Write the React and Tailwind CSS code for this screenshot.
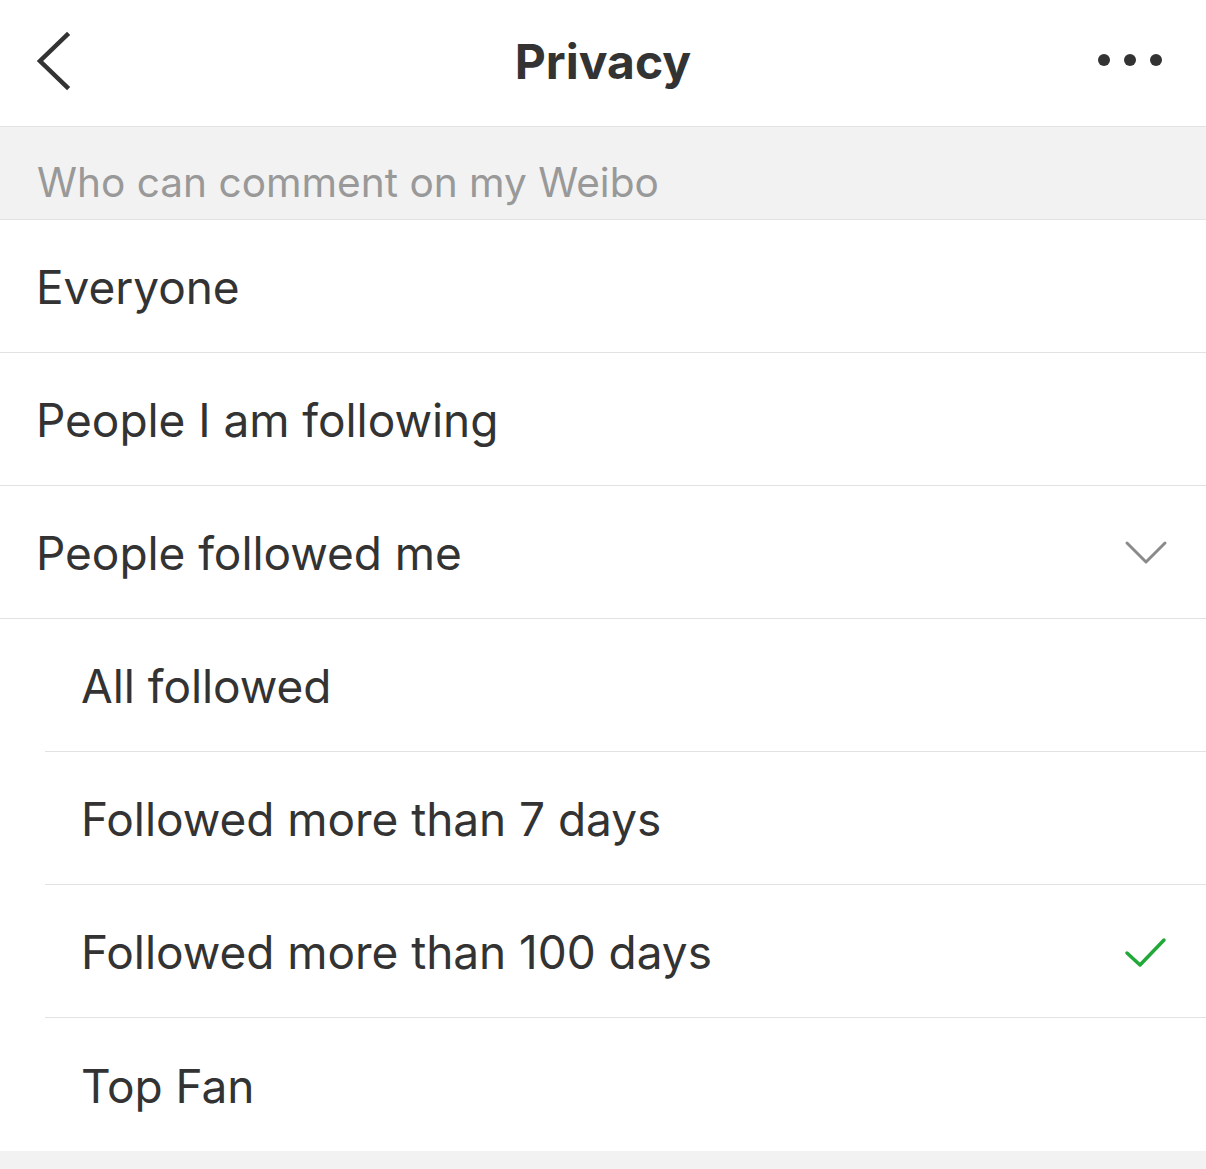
import React from "react";

const font = { fontFamily: "Inter, 'Noto Sans', sans-serif" };

function Chevron() {
  return (
    <svg width="44" height="30" viewBox="0 0 44 30" fill="none" className="mt-[1px]">
      <path d="M3 4 L22 23 L41 4" stroke="#8a8a8a" strokeWidth="3" strokeLinecap="round" strokeLinejoin="round" />
    </svg>
  );
}

function Check() {
  return (
    <svg width="44" height="34" viewBox="0 0 44 34" fill="none" className="ml-[2px]">
      <path d="M3 17 L16 29 L40 4" stroke="#22a838" strokeWidth="3.5" strokeLinecap="round" strokeLinejoin="round" />
    </svg>
  );
}

function Row({ label, sub, right, last }) {
  return (
    <div className={sub ? "pl-[45px]" : ""}>
      <div
        className={
          "flex items-center h-[133px] pt-[3px] pl-[36px] pr-[38px] " +
          (last ? "" : "border-b border-[#e2e2e2]")
        }
      >
        <span className="flex-1 text-[46px] text-[#333333] tracking-[-0.05px]">{label}</span>
        {right}
      </div>
    </div>
  );
}

export default function App() {
  return (
    <div className="w-[1206px] h-[1169px] bg-[#f2f2f2] overflow-hidden" style={font}>
      <div className="h-[127px] bg-white grid grid-cols-[1fr_auto_1fr] items-center px-[36px] border-b border-[#e2e2e2]">
        <div className="flex items-center">
          <svg width="36" height="60" viewBox="0 0 36 60" fill="none" className="mb-[4px]">
            <path d="M31 4 L4 30 L31 56" stroke="#333" strokeWidth="4.5" strokeLinecap="square" strokeLinejoin="miter" />
          </svg>
        </div>
        <span className="text-[48px] font-bold text-[#333333] pb-[2px]">Privacy</span>
        <div className="flex justify-end gap-[14px] items-center pr-[8px] pb-[6px]">
          <span className="w-[12px] h-[12px] rounded-full bg-[#333]" />
          <span className="w-[12px] h-[12px] rounded-full bg-[#333]" />
          <span className="w-[12px] h-[12px] rounded-full bg-[#333]" />
        </div>
      </div>
      <div className="h-[93px] flex items-end pb-[5px] pl-[37px] border-b border-[#e2e2e2]">
        <span className="text-[40.6px] text-[#999999]">Who can comment on my Weibo</span>
      </div>
      <div className="bg-white">
        <Row label="Everyone" />
        <Row label="People I am following" />
        <Row label="People followed me" right={<Chevron />} />
        <Row label="All followed" sub />
        <Row label="Followed more than 7 days" sub />
        <Row label="Followed more than 100 days" sub right={<Check />} />
        <Row label="Top Fan" sub last />
      </div>
    </div>
  );
}
